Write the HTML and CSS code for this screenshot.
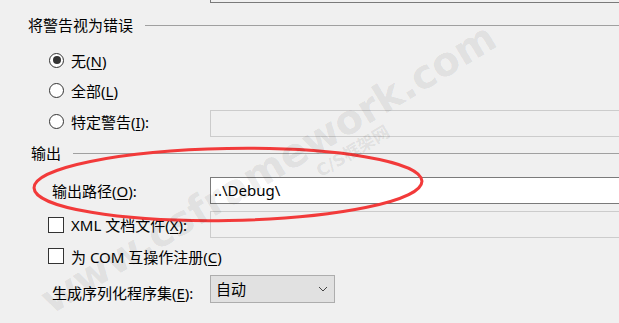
FILE: index.html
```html
<!DOCTYPE html>
<html lang="zh-CN">
<head>
  <meta charset="UTF-8" />
  <title>生成 - 项目属性</title>
  <link rel="stylesheet" href="styles.css">
</head>
<body>

  <div class="page">
    <div class="top-field"></div>

    <div class="group-title title-warn">
      <span>将警告视为错误</span>
      <span class="group-line"></span>
    </div>

    <div class="row option first">
      <div class="opt"><span class="radio checked"></span><span>无(<u>N</u>)</span></div>
    </div>
    <div class="row option">
      <div class="opt"><span class="radio"></span><span>全部(<u>L</u>)</span></div>
    </div>
    <div class="row option">
      <div class="opt"><span class="radio"></span><span>特定警告(<u>I</u>):</span></div>
      <div class="field disabled field-low"></div>
    </div>

    <div class="group-title title-out">
      <span>输出</span>
      <span class="group-line"></span>
    </div>

    <div class="row row-path">
      <div class="label">输出路径(<u>O</u>):</div>
      <div class="field">..\Debug\</div>
    </div>
    <div class="row row-xml">
      <div class="opt"><span class="check"></span><span>XML 文档文件(<u>X</u>):</span></div>
      <div class="field disabled"></div>
    </div>
    <div class="row row-com">
      <div class="opt"><span class="check"></span><span>为 COM 互操作注册(<u>C</u>)</span></div>
    </div>
    <div class="row row-serial">
      <div class="label label-low">生成序列化程序集(<u>E</u>):</div>
      <div class="combo">
        <span>自动</span>
        <svg width="10" height="6" viewBox="0 0 10 6"><path d="M1 1 L5 5 L9 1" fill="none" stroke="#444" stroke-width="1"/></svg>
      </div>
    </div>
  </div>

  <!-- 标注和水印 -->
  <svg class="mark" width="619" height="323" viewBox="0 0 619 323">
    <ellipse cx="228" cy="184.5" rx="194" ry="36" transform="rotate(-1 228 184.5)" fill="none" stroke="#f23a3a" stroke-width="3"/>
  </svg>
  <div class="watermark wm-site">www.csframework.com</div>
  <div class="watermark wm-name">C/S框架网</div>

</body>
</html>
```

FILE: styles.css
```css
body {
  margin: 0;
  width: 619px;
  height: 323px;
  overflow: hidden;
  position: relative;
  background: #f0f0f0;
  color: #000;
  font-family: "Noto Sans", "Noto Sans CJK SC", sans-serif;
  font-size: 15px;
}

u {
  text-decoration: underline;
  text-underline-offset: 2px;
  text-decoration-thickness: 1px;
}

.top-field {
  margin-left: 210px;
  height: 2px;
  border-left: 1px solid #7a7a7a;
  border-bottom: 1px solid #7a7a7a;
}

/* 分组标题 */
.group-title {
  display: flex;
  align-items: center;
  gap: 12px;
  height: 20px;
  line-height: 20px;
}

.group-line {
  flex: 1;
  height: 1px;
  background: #a0a0a0;
}

.title-warn {
  margin-top: 12px;
  padding-left: 28px;
}

.title-out {
  margin-top: 8px;
  padding-left: 31px;
}

/* 行 */
.row {
  display: grid;
  grid-template-columns: 210px 1fr;
  align-items: center;
}

.option {
  height: 30px;
}

.option.first {
  margin-top: 10px;
}

.opt {
  display: flex;
  align-items: center;
  padding-left: 48px;
  white-space: nowrap;
}

.label {
  padding-left: 52px;
  white-space: nowrap;
}

.label-low {
  padding-top: 8px;
}

.radio {
  flex-shrink: 0;
  width: 13px;
  height: 13px;
  border: 1px solid #333;
  border-radius: 50%;
  background: #fff;
  margin-left: 1px;
  margin-right: 7px;
  display: flex;
  align-items: center;
  justify-content: center;
}

.radio.checked::after {
  content: "";
  width: 8px;
  height: 8px;
  border-radius: 50%;
  background: #333;
}

.check {
  flex-shrink: 0;
  width: 14px;
  height: 14px;
  border: 1px solid #333;
  background: #fff;
  margin-right: 7px;
}

/* 输入框，右边延伸出窗口 */
.field {
  box-sizing: border-box;
  height: 27px;
  line-height: 25px;
  padding-left: 3px;
  border: 1px solid #7a7a7a;
  border-right: none;
  background: #fff;
}

.field.disabled {
  border-color: #cccccc;
  background: #f0f0f0;
}

.field-low {
  align-self: start;
  margin-top: 5px;
}

.row-path {
  height: 27px;
  margin-top: 14px;
}

.row-xml {
  height: 27px;
  margin-top: 7px;
}

.row-com {
  height: 30px;
  margin-top: 3px;
}

.row-serial {
  height: 28px;
  margin-top: 3px;
}

.combo {
  box-sizing: border-box;
  width: 125px;
  height: 28px;
  padding: 0 6px 0 5px;
  border: 1px solid #adadad;
  background: #e1e1e1;
  display: flex;
  align-items: center;
  justify-content: space-between;
}

/* 覆盖层 */
.mark {
  position: absolute;
  left: 0;
  top: 0;
  pointer-events: none;
}

.watermark {
  position: absolute;
  white-space: nowrap;
  font-family: "DejaVu Sans", "Noto Sans CJK SC", sans-serif;
  font-weight: bold;
  color: rgba(0, 0, 0, 0.085);
  transform: translate(-50%, -50%) rotate(-31deg);
  pointer-events: none;
}

.wm-site {
  left: 268px;
  top: 168px;
  font-size: 40px;
}

.wm-name {
  left: 352px;
  top: 150px;
  font-size: 17px;
}
```
